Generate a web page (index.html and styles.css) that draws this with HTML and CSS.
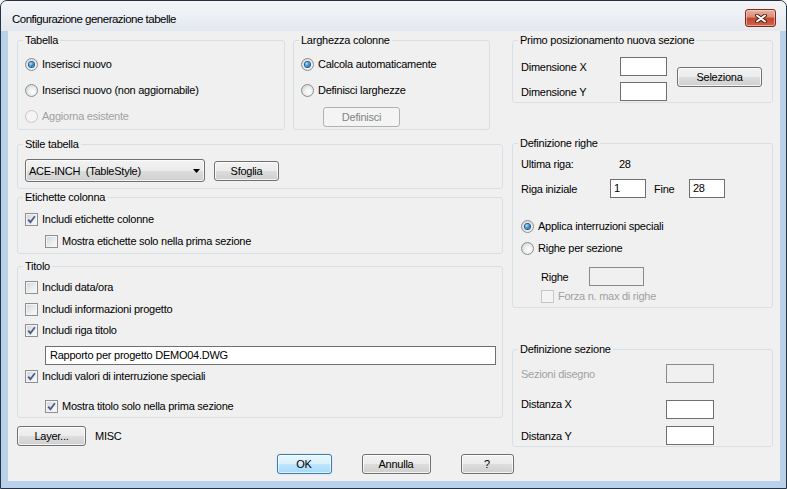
FILE: index.html
```html
<!DOCTYPE html>
<html lang="it">
<head>
<meta charset="utf-8">
<title>Configurazione generazione tabelle</title>
<link rel="stylesheet" href="styles.css">
</head>
<body>
<div class="window">
  <div class="titlebar">
    <span class="title">Configurazione generazione tabelle</span>
    <span class="close" aria-label="Chiudi">
      <svg width="12" height="9" viewBox="0 0 12 9"><path d="M2 1.5L10 7.5M10 1.5L2 7.5" stroke="#4a1a12" stroke-width="3.8" stroke-linecap="round"/><path d="M2 1.5L10 7.5M10 1.5L2 7.5" stroke="#ffffff" stroke-width="2" stroke-linecap="round"/></svg>
    </span>
  </div>
  <div class="client">
    <div class="columns">
      <div class="col-left">
        <div class="toprow">
          <section class="group g-tabella">
            <div class="legend">Tabella</div>
            <div class="opts">
              <div class="opt"><span class="radio on"></span><span>Inserisci nuovo</span></div>
              <div class="opt"><span class="radio"></span><span>Inserisci nuovo (non aggiornabile)</span></div>
              <div class="opt disabled"><span class="radio"></span><span>Aggiorna esistente</span></div>
            </div>
          </section>
          <section class="group g-larghezza">
            <div class="legend">Larghezza colonne</div>
            <div class="opts">
              <div class="opt"><span class="radio on"></span><span>Calcola automaticamente</span></div>
              <div class="opt"><span class="radio"></span><span>Definisci larghezze</span></div>
              <div class="btn disabled btn-definisci">Definisci</div>
            </div>
          </section>
        </div>

        <section class="group g-stile">
          <div class="legend">Stile tabella</div>
          <div class="stile-row">
            <div class="combo"><span class="combo-text">ACE-INCH  (TableStyle)</span><svg class="arrow" width="7" height="4" viewBox="0 0 7 4"><path d="M0 0H7L3.5 4Z" fill="#000"/></svg></div>
            <div class="btn btn-sfoglia">Sfoglia</div>
          </div>
        </section>

        <section class="group g-etichette">
          <div class="legend">Etichette colonna</div>
          <div class="checks">
            <div class="opt mt9"><span class="cb"><svg width="11" height="11" viewBox="0 0 11 11"><path d="M2.2 5.6L4.4 8.2L8.9 2.3" fill="none" stroke="#4a5d8c" stroke-width="1.8"/></svg></span><span>Includi etichette colonne</span></div>
            <div class="opt mt9 indent"><span class="cb"></span><span>Mostra etichette solo nella prima sezione</span></div>
          </div>
        </section>

        <section class="group g-titolo">
          <div class="legend">Titolo</div>
          <div class="checks">
            <div class="opt mt8"><span class="cb"></span><span>Includi data/ora</span></div>
            <div class="opt mt9"><span class="cb"></span><span>Includi informazioni progetto</span></div>
            <div class="opt mt8"><span class="cb"><svg width="11" height="11" viewBox="0 0 11 11"><path d="M2.2 5.6L4.4 8.2L8.9 2.3" fill="none" stroke="#4a5d8c" stroke-width="1.8"/></svg></span><span>Includi riga titolo</span></div>
            <div class="tb tb-wide mt9">Rapporto per progetto DEMO04.DWG</div>
            <div class="opt mt5"><span class="cb"><svg width="11" height="11" viewBox="0 0 11 11"><path d="M2.2 5.6L4.4 8.2L8.9 2.3" fill="none" stroke="#4a5d8c" stroke-width="1.8"/></svg></span><span>Includi valori di interruzione speciali</span></div>
            <div class="opt mt17 indent"><span class="cb"><svg width="11" height="11" viewBox="0 0 11 11"><path d="M2.2 5.6L4.4 8.2L8.9 2.3" fill="none" stroke="#4a5d8c" stroke-width="1.8"/></svg></span><span>Mostra titolo solo nella prima sezione</span></div>
          </div>
        </section>

        <div class="layer-row">
          <div class="btn btn-layer">Layer...</div>
          <span>MISC</span>
        </div>
      </div>

      <div class="col-right">
        <section class="group g-primo">
          <div class="legend">Primo posizionamento nuova sezione</div>
          <div class="primo-grid">
            <span>Dimensione X</span>
            <div class="tb tb-dim"></div>
            <div class="btn btn-seleziona">Seleziona</div>
            <span>Dimensione Y</span>
            <div class="tb tb-dim"></div>
          </div>
        </section>

        <section class="group g-righe">
          <div class="legend">Definizione righe</div>
          <div class="body">
            <div class="row row-text mt8"><span class="w98">Ultima riga:</span><span>28</span></div>
            <div class="row row-field mt8"><span class="w89">Riga iniziale</span><div class="tb tb-num">1</div><span class="fine">Fine</span><div class="tb tb-num">28</div></div>
            <div class="opt mt22"><span class="radio on"></span><span>Applica interruzioni speciali</span></div>
            <div class="opt mt9"><span class="radio"></span><span>Righe per sezione</span></div>
            <div class="row row-field mt12 indent"><span class="w48">Righe</span><div class="tb dis tb-righe"></div></div>
            <div class="opt disabled mt4 indent"><span class="cb"></span><span>Forza n. max di righe</span></div>
          </div>
        </section>

        <section class="group g-sezione">
          <div class="legend">Definizione sezione</div>
          <div class="body">
            <div class="row row-field mt8 disabled-text"><span class="w145">Sezioni disegno</span><div class="tb dis tb-dim2"></div></div>
            <div class="row row-field mt17"><span class="w145 lift">Distanza X</span><div class="tb tb-dim2"></div></div>
            <div class="row row-field mt7"><span class="w145">Distanza Y</span><div class="tb tb-dim2"></div></div>
          </div>
        </section>
      </div>
    </div>

    <div class="actions">
      <div class="btn default btn-ok">OK</div>
      <div class="btn btn-annulla">Annulla</div>
      <div class="btn btn-help">?</div>
    </div>
  </div>
</div>
</body>
</html>
```

FILE: styles.css
```css
* { box-sizing: border-box; }

body {
  margin: 0;
  background: #f3f4f6;
  font-family: "Liberation Sans", Arial, sans-serif;
  font-size: 11px;
  letter-spacing: -0.25px;
  color: #000;
}

.window {
  width: 787px;
  height: 489px;
  border: 1px solid #26323f;
  border-radius: 7px 7px 0 0;
  background: #b9d1ea;
  display: flex;
  flex-direction: column;
  overflow: hidden;
}

.titlebar {
  height: 30px;
  flex: none;
  display: flex;
  justify-content: space-between;
  align-items: flex-start;
  padding: 0 10px 0 11px;
  background: linear-gradient(#f3f5f8, #e4e9ef);
}

.title {
  margin-top: 11px;
  font-size: 11.5px;
  letter-spacing: -0.5px;
  line-height: 15px;
  color: #000;
}

.close {
  margin-top: 8px;
  width: 31px;
  height: 18px;
  border: 1px solid #7b2a1d;
  border-radius: 3px;
  background: linear-gradient(#eab1a2 0%, #dc8a74 45%, #c4452b 50%, #d0634a 100%);
  box-shadow: inset 0 0 0 1px rgba(255, 220, 210, 0.55);
  display: flex;
  align-items: center;
  justify-content: center;
}

.client {
  flex: 1;
  margin: 0 6px 7px 7px;
  background: #f0f0f0;
  padding: 9px 7px 0 9px;
  display: flex;
  flex-direction: column;
}

.columns {
  display: flex;
  gap: 9px;
}

.col-left {
  width: 486px;
  display: flex;
  flex-direction: column;
}

.col-right {
  width: 261px;
  display: flex;
  flex-direction: column;
}

/* group boxes */
.group {
  border: 1px solid #d5dfe5;
  border-radius: 3px;
}

.legend {
  width: max-content;
  height: 13px;
  line-height: 13px;
  margin: -7px 0 0 5px;
  padding: 0 2px;
  background: #f0f0f0;
}

.toprow {
  display: flex;
  gap: 8px;
}

.g-tabella { width: 268px; height: 90px; }
.g-larghezza { width: 197px; height: 90px; }

.opts {
  display: flex;
  flex-direction: column;
  gap: 13px;
  padding: 11px 0 0 7px;
}

.opt {
  display: flex;
  align-items: center;
  gap: 4px;
  height: 13px;
  line-height: 13px;
  white-space: nowrap;
}

.opt.disabled { color: #a0a0a0; }

.g-stile { height: 45px; margin-top: 14px; }
.g-etichette { height: 57px; margin-top: 8px; }
.g-titolo { height: 152px; margin-top: 12px; }

.stile-row {
  display: flex;
  align-items: center;
  gap: 9px;
  padding: 8px 0 0 7px;
}

.checks {
  display: flex;
  flex-direction: column;
  padding-left: 7px;
}

.indent { margin-left: 20px; }

.mt4 { margin-top: 4px; }
.mt5 { margin-top: 5px; }
.mt7 { margin-top: 7px; }
.mt8 { margin-top: 8px; }
.mt9 { margin-top: 9px; }
.mt12 { margin-top: 12px; }
.mt17 { margin-top: 17px; }
.mt22 { margin-top: 22px; }

.layer-row {
  display: flex;
  align-items: center;
  gap: 9px;
  height: 20px;
  margin-top: 8px;
}

/* right column */
.g-primo { height: 63px; }
.g-righe { height: 165px; margin-top: 40px; }
.g-sezione { height: 98px; margin-top: 41px; }

.primo-grid {
  display: grid;
  grid-template-columns: 99px 47px auto;
  grid-template-rows: 19px 19px;
  row-gap: 6px;
  align-items: center;
  padding: 10px 0 0 8px;
}

.btn-seleziona {
  grid-column: 3;
  grid-row: 1 / 3;
  align-self: start;
  margin: 10px 0 0 10px;
  width: 85px;
  height: 20px;
}

.body {
  display: flex;
  flex-direction: column;
  padding-left: 8px;
}

.row {
  display: flex;
  align-items: center;
  white-space: nowrap;
}

.row-text { height: 13px; line-height: 13px; }
.row-field { height: 19px; }

.w98 { width: 98px; }
.w89 { width: 89px; }
.w48 { width: 48px; }
.w145 { width: 145px; }
.lift { margin-bottom: 11px; }
.fine { width: 35px; margin-left: 8px; }
.disabled-text { color: #a0a0a0; }

/* controls */
.radio {
  flex: none;
  width: 13px;
  height: 13px;
  border-radius: 50%;
  border: 1px solid #8b8d8f;
  background: radial-gradient(circle at 60% 60%, #ffffff 0%, #ececec 45%, #c6c8cb 100%);
  display: flex;
  align-items: center;
  justify-content: center;
}

.radio.on::after {
  content: "";
  width: 5px;
  height: 5px;
  border-radius: 50%;
  background: radial-gradient(circle at 35% 35%, #b4e6fb 0%, #2f8fd4 50%, #0c4a88 100%);
  box-shadow: 0 0 0 1px #28598a;
}

.opt.disabled .radio {
  border-color: #c6c6c6;
  background: #f4f4f4;
}

.cb {
  flex: none;
  width: 13px;
  height: 13px;
  border: 1px solid #8e8f8f;
  background: linear-gradient(135deg, #cfd2d6 0%, #ececee 55%, #fbfbfb 100%);
  box-shadow: inset 0 0 0 1px #f4f4f4;
  display: flex;
}

.opt.disabled .cb {
  border-color: #c6c6c6;
  background: #f4f4f4;
  box-shadow: none;
}

.tb {
  height: 19px;
  border: 1px solid #6f6f6f;
  background: #ffffff;
  padding: 0 3px;
  line-height: 17px;
  white-space: nowrap;
}

.tb.dis {
  background: #f0f0f0;
  border-color: #8a8a8a;
}

.tb-wide { width: 451px; margin-left: 20px; padding-left: 4px; }
.tb-dim { width: 47px; }
.tb-num { width: 36px; }
.tb-righe { width: 55px; }
.tb-dim2 { width: 48px; }

.btn {
  display: flex;
  align-items: center;
  justify-content: center;
  height: 20px;
  border: 1px solid #707070;
  border-radius: 3px;
  background: linear-gradient(#f2f2f2 0%, #ebebeb 50%, #dddddd 51%, #cfcfcf 100%);
  box-shadow: inset 0 0 0 1px rgba(255, 255, 255, 0.75);
  white-space: nowrap;
  flex: none;
}

.btn.disabled {
  border-color: #adb2b5;
  background: #f4f4f4;
  box-shadow: none;
  color: #838383;
}

.btn.default {
  border-color: #3c7fb1;
  background: linear-gradient(#eaf6fd 0%, #d9f0fc 50%, #bee6fd 51%, #a7d9f5 100%);
  box-shadow: inset 0 0 0 1px rgba(255, 255, 255, 0.6), 0 0 1px #5fb6e8;
}

.btn-definisci { width: 77px; margin: -3px 0 0 22px; }
.btn-sfoglia { width: 65px; }
.btn-layer { width: 69px; }

.combo {
  width: 180px;
  height: 23px;
  border: 1px solid #707070;
  border-radius: 3px;
  background: linear-gradient(#f2f2f2 0%, #ebebeb 50%, #dddddd 51%, #cfcfcf 100%);
  box-shadow: inset 0 0 0 1px rgba(255, 255, 255, 0.75);
  display: flex;
  align-items: center;
  justify-content: space-between;
  padding: 0 4px 0 3px;
  flex: none;
}

.combo-text { white-space: pre; }

.actions {
  display: flex;
  justify-content: center;
  gap: 30px;
  margin-top: 7px;
}

.btn-ok { width: 55px; }
.btn-annulla { width: 69px; }
.btn-help { width: 53px; }
```
